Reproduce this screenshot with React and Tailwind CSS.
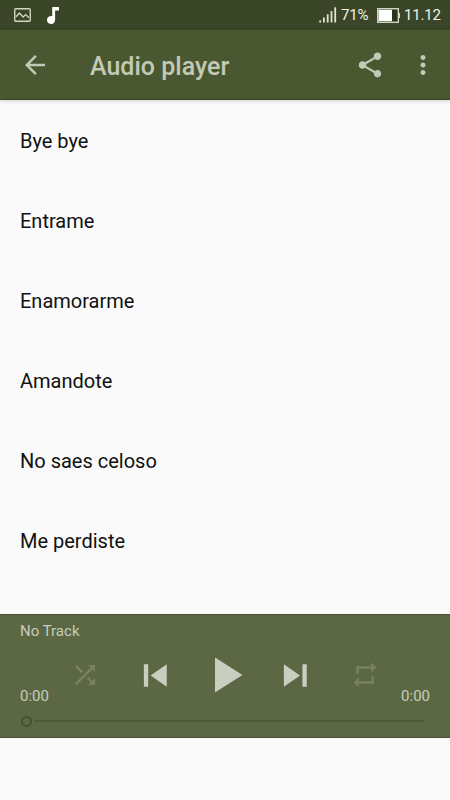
const TRACKS = ['Bye bye', 'Entrame', 'Enamorarme', 'Amandote', 'No saes celoso', 'Me perdiste'];

const Icon = ({ path, className }) => (
    <svg className={className} viewBox="0 0 24 24" fill="currentColor">
        <path d={path} />
    </svg>
);

const icons = {
    back: 'M20 11H7.83l5.59-5.59L12 4l-8 8 8 8 1.41-1.41L7.83 13H20v-2z',
    share: 'M18 16.08c-.76 0-1.44.3-1.96.77L8.91 12.7c.05-.23.09-.46.09-.7s-.04-.47-.09-.7l7.05-4.11c.54.5 1.25.81 2.04.81 1.66 0 3-1.34 3-3s-1.34-3-3-3-3 1.34-3 3c0 .24.04.47.09.7L8.04 9.81C7.5 9.31 6.79 9 6 9c-1.66 0-3 1.34-3 3s1.34 3 3 3c.79 0 1.5-.31 2.04-.81l7.12 4.16c-.05.21-.08.43-.08.65 0 1.61 1.31 2.92 2.92 2.92s2.92-1.31 2.92-2.92-1.31-2.92-2.92-2.92z',
    more: 'M12 8c1.1 0 2-.9 2-2s-.9-2-2-2-2 .9-2 2 .9 2 2 2zm0 2c-1.1 0-2 .9-2 2s.9 2 2 2 2-.9 2-2-.9-2-2-2zm0 6c-1.1 0-2 .9-2 2s.9 2 2 2 2-.9 2-2-.9-2-2-2z',
    shuffle: 'M10.59 9.17L5.41 4 4 5.41l5.17 5.17 1.42-1.41zM14.5 4l2.04 2.04L4 18.59 5.41 20 17.96 7.46 20 9.5V4h-5.5zm.33 9.41l-1.41 1.41 3.13 3.13L14.5 20H20v-5.5l-2.04 2.04-3.13-3.13z',
    previous: 'M5.8 6h2.3v12H5.8zm3.6 6l8.6 6V6z',
    play: 'M8 5v14l11-7z',
    next: 'M5.8 18l8.6-6-8.6-6v12zM15.7 6v12H18V6h-2.3z',
    repeat: 'M7 7h10v3l4-4-4-4v3H5v6h2V7zm10 10H7v-3l-4 4 4 4v-3h12v-6h-2v4z',
};

const StatusBar = () => (
    <div className="h-[30px] shrink-0 bg-[#3b4527] flex items-center pl-3.5 pr-[10px] text-[#eff2e8]">
        {/* Notifications */}
        <svg className="w-[17px] h-[14px]" viewBox="0 0 17 14" fill="none" stroke="#cfd6c2">
            <rect x="0.75" y="0.75" width="15.5" height="12.5" rx="1" strokeWidth="1.4" />
            <path d="M2 8.8l3.4-3.7 3.7 3.9 2.5-2.4L15 9.8" strokeWidth="1.4" />
        </svg>
        <svg className="w-3 h-[17px] ml-4" viewBox="0 0 12 17" fill="#fdfff8">
            <path d="M5.2 0H12v3.6H8.1v9.2a4.05 4.05 0 1 1-2.9-3.7z" />
        </svg>

        {/* Signal, battery and clock */}
        <svg className="w-[18px] h-4 ml-auto" viewBox="0 0 18 16" fill="#dfe4d4">
            <rect x="0.3" y="13.3" width="1.8" height="2.2" />
            <rect x="4" y="10.5" width="1.8" height="5" />
            <rect x="7.8" y="7.2" width="1.8" height="8.3" />
            <rect x="11.6" y="4" width="1.8" height="11.5" />
            <rect x="15.3" y="0.3" width="1.8" height="15.2" />
        </svg>
        <span className="ml-1 w-[36px] pt-px text-[15px] leading-none tracking-[-0.2px] whitespace-nowrap">71%</span>
        <svg className="w-6 h-[15px] shrink-0" viewBox="0 0 24 15">
            <rect x="0.7" y="0.7" width="20.6" height="13.6" fill="#2b341a" stroke="#cfd6c2" strokeWidth="1.4" />
            <rect x="1.5" y="1.8" width="13.5" height="11.4" fill="#ffffff" />
            <rect x="21.5" y="5" width="1.5" height="5" fill="#cfd6c2" />
        </svg>
        <span className="ml-[3px] w-[36px] pt-px text-[15px] leading-none tracking-[-0.2px] whitespace-nowrap">11.12</span>
    </div>
);

const Toolbar = () => (
    <header className="relative h-[70px] shrink-0 bg-[#4a5831] border-b border-[#38431f] shadow-[0_1px_4px_rgba(0,0,0,0.18)] flex items-center px-5 text-[#c2cab6]">
        <Icon path={icons.back} className="size-[30px]" />
        <h1 className="ml-10 pt-1 text-[25px] leading-none font-medium">Audio player</h1>
        <Icon path={icons.share} className="size-[30px] ml-auto" />
        <Icon path={icons.more} className="size-[30px] ml-[22.5px] -mr-[7.5px]" />
    </header>
);

const Player = () => (
    <section className="h-[124px] shrink-0 bg-[#5c6843] border-y border-[#4a5534] px-5 pt-[5px] text-[15px] text-[#c6cdbc]">
        <p className="leading-[22px]">No Track</p>
        <div className="flex h-[66px] items-center justify-between">
            <span className="self-end w-[50px] pb-0.5 leading-[20px]">0:00</span>
            <Icon path={icons.shuffle} className="size-[30px] text-[#77825f]" />
            <Icon path={icons.previous} className="size-[45px] ml-[32.5px] text-[#c8cec0]" />
            <Icon path={icons.play} className="size-[60px] ml-[17.5px] text-[#c8cec0]" />
            <Icon path={icons.next} className="size-[45px] ml-[17.5px] text-[#c8cec0]" />
            <Icon path={icons.repeat} className="size-[30px] ml-[32.5px] text-[#77825f]" />
            <span className="self-end w-[50px] pb-0.5 leading-[20px] text-right">0:00</span>
        </div>
        {/* Seek bar */}
        <div className="mt-[7px] flex h-3 items-center pl-px pr-1.5">
            <div className="size-[11px] rounded-full border-[2.5px] border-[#465330]" />
            <div className="ml-0.5 h-0.5 flex-1 bg-[#4e5b37]" />
        </div>
    </section>
);

const App = () => {
    return (
        <div className="h-screen bg-[#fafafa] flex flex-col overflow-hidden font-[Roboto,sans-serif]">
            <StatusBar />
            <Toolbar />
            <ul className="flex-1 overflow-hidden">
                {TRACKS.map((track) => (
                    <li key={track} className="h-20 flex items-center px-5 pt-0.5 text-xl text-[#111111]">
                        {track}
                    </li>
                ))}
            </ul>
            <Player />
            <div className="h-[62px] shrink-0" />
        </div>
    );
};

export default App;
